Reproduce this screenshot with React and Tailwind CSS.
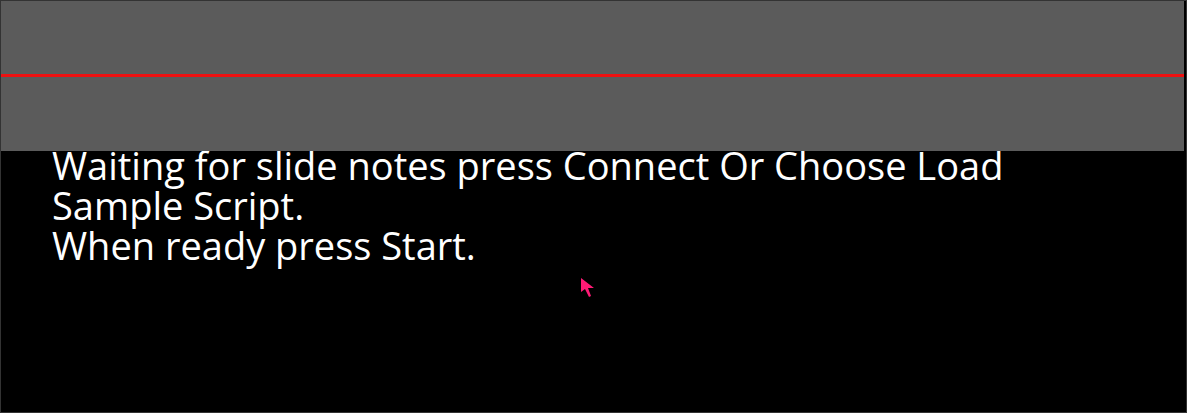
export default function App() {
    return (
        <div className="relative w-[1187px] h-[413px] bg-black border border-[#333333] overflow-hidden">

            <div className="relative z-10 h-[150px] mr-[2px] bg-[#5b5b5b] flex flex-col">
                <div className="h-[73px]" />
                <div className="h-[3px] bg-[#ee1111]" />
            </div>

            <div
                className="pl-[51px] w-[1080px] text-white text-[38px] leading-[40px] -mt-[6px]"
                style={{ fontFamily: '"Open Sans", "Noto Sans", sans-serif' }}
            >
                Waiting for slide notes press Connect Or Choose Load Sample Script.
                <br />
                When ready press Start.
            </div>

            {/* mouse cursor */}
            <svg
                className="absolute left-[579px] top-[276px]"
                width="18"
                height="26"
                viewBox="0 0 18 26"
            >
                <path d="M1 1 L1 15 L5 12 L9 20 L11 19 L8 11 L14 11 Z" fill="#ff1a75" />
            </svg>
        </div>
    );
}
